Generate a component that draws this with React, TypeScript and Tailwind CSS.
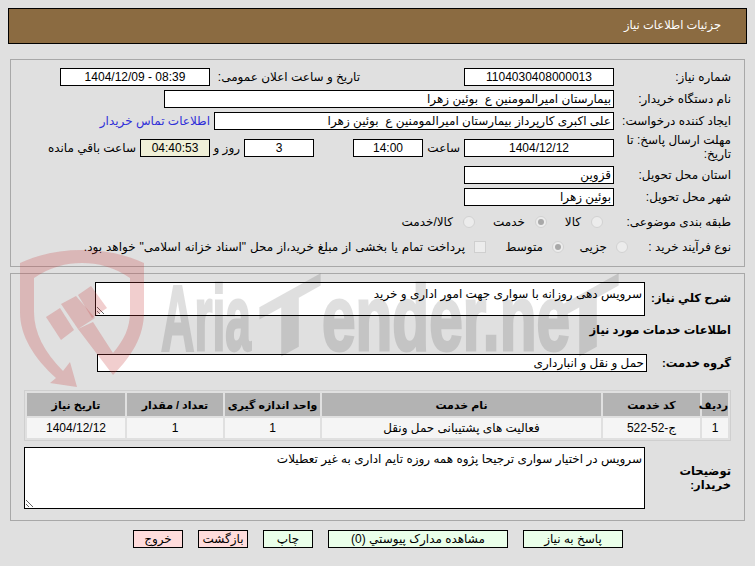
import React from 'react';

const Field = ({ value, width, center, ltr }: { value: string; width: string; center?: boolean; ltr?: boolean }) => (
  <input
    readOnly
    value={value}
    dir={ltr ? 'ltr' : 'rtl'}
    className={`${width} ${center ? 'text-center' : 'text-right'} h-[18px] shrink-0 border border-black bg-white px-[2px] text-[12px] text-black outline-none`}
  />
);

const Radio = ({ checked }: { checked?: boolean }) => (
  <span className="flex h-[12px] w-[12px] shrink-0 items-center justify-center rounded-full border border-[#d2d2d2] bg-[#ececec]">
    {checked && <span className="h-[6px] w-[6px] rounded-full bg-[#a8a8a8]" />}
  </span>
);

const Btn = ({ label, width, pink }: { label: string; width: string; pink?: boolean }) => (
  <button className={`${width} ${pink ? 'bg-[#ffdcdc]' : 'bg-[#eaffea]'} h-[18px] border border-black text-[12px] leading-none text-black`}>
    {label}
  </button>
);

const columns = [
  { title: 'ردیف', value: '1', width: 'w-[26px]' },
  { title: 'کد خدمت', value: 'ج-52-522', width: 'w-[97px]' },
  { title: 'نام خدمت', value: 'فعالیت های پشتیبانی حمل ونقل', width: 'w-[279px]' },
  { title: 'واحد اندازه گیری', value: '1', width: 'w-[95px]' },
  { title: 'تعداد / مقدار', value: '1', width: 'w-[96px]' },
  { title: 'تاریخ نیاز', value: '1404/12/12', width: 'w-[98px]' },
];

export default function App() {
  return (
    <div dir="rtl" className="relative h-[566px] w-[755px] overflow-hidden bg-[#e0e0e0] pt-2 font-['Liberation_Sans','DejaVu_Sans',sans-serif] text-[12px] text-black">
      <div className="mx-2 flex h-[36px] items-center border border-black bg-[#8b6b41] pr-[25px] text-[11.5px] text-white">
        جزئیات اطلاعات نیاز
      </div>

      <div className="mx-[10px] mt-[15px] border border-[#a8a8a8] pb-[12px] pr-[13px] pt-2">
        <div className="flex h-[18px] items-center">
          <div className="w-[117px] shrink-0">شماره نیاز:</div>
          <Field value="1104030408000013" width="w-[150px]" center />
          <div className="w-[254px] shrink-0 whitespace-nowrap pr-[104px]">تاریخ و ساعت اعلان عمومی:</div>
          <Field value="1404/12/09 - 08:39" width="w-[150px]" center ltr />
        </div>
        <div className="mt-1 flex h-[18px] items-center">
          <div className="w-[117px] shrink-0">نام دستگاه خریدار:</div>
          <Field value="بیمارستان امیرالمومنین ع  بوئین زهرا" width="w-[450px]" />
        </div>
        <div className="mt-1 flex h-[18px] items-center">
          <div className="w-[117px] shrink-0">ایجاد کننده درخواست:</div>
          <Field value="علی اکبری کارپرداز بیمارستان امیرالمومنین ع  بوئین زهرا" width="w-[400px]" />
          <div className="mr-1 whitespace-nowrap text-[#2f2fd8]">اطلاعات تماس خریدار</div>
        </div>
        <div className="mt-[9px] flex h-[18px] items-center">
          <div className="-mt-[3px] w-[117px] shrink-0 leading-[14px]">مهلت ارسال پاسخ: تا تاریخ:</div>
          <Field value="1404/12/12" width="w-[150px]" center />
          <div className="w-[41px] shrink-0 pr-[4px]">ساعت</div>
          <Field value="14:00" width="w-[70px]" center />
          <div className="w-[39px] shrink-0" />
          <Field value="3" width="w-[70px]" center />
          <div className="w-[34px] shrink-0 whitespace-nowrap pr-[4px]">روز و</div>
          <input readOnly value="04:40:53" dir="ltr" className="h-[18px] w-[70px] shrink-0 border border-black bg-[#f0f0d8] text-center text-[12px] outline-none" />
          <div className="mr-1 whitespace-nowrap">ساعت باقي مانده</div>
        </div>
        <div className="mt-[9px] flex h-[18px] items-center">
          <div className="w-[117px] shrink-0">استان محل تحویل:</div>
          <Field value="قزوین" width="w-[150px]" />
        </div>
        <div className="mt-1 flex h-[18px] items-center">
          <div className="w-[117px] shrink-0">شهر محل تحویل:</div>
          <Field value="بوئین زهرا" width="w-[150px]" />
        </div>
        <div className="mt-[9px] flex h-[14px] items-center">
          <div className="w-[128px] shrink-0">طبقه بندی موضوعی:</div>
          <div className="flex w-[56px] shrink-0 items-center gap-[10px]"><Radio />کالا</div>
          <div className="flex w-[72px] shrink-0 items-center gap-[10px]"><Radio checked />خدمت</div>
          <div className="flex items-center gap-[10px]"><Radio />کالا/خدمت</div>
        </div>
        <div className="mt-[11px] flex h-[14px] items-center">
          <div className="w-[103px] shrink-0">نوع فرآیند خرید :</div>
          <div className="flex w-[64px] shrink-0 items-center gap-[9px]"><Radio />جزیی</div>
          <div className="flex w-[78px] shrink-0 items-center gap-[9px]"><Radio checked />متوسط</div>
          <div className="flex items-center gap-[9px] whitespace-nowrap [word-spacing:0.6px]">
            <span className="h-[12px] w-[12px] shrink-0 border border-[#cfcfcf] bg-[#ececec]" />
            پرداخت تمام یا بخشی از مبلغ خرید،از محل "اسناد خزانه اسلامی" خواهد بود.
          </div>
        </div>
      </div>

      <div className="mx-[10px] mt-[6px] h-[248px] border border-[#a8a8a8] pr-[13px] pt-2">
        <div className="flex">
          <div className="flex h-[34px] w-[86px] shrink-0 items-center text-[11.5px] font-bold">شرح کلي نیاز:</div>
          <textarea readOnly defaultValue="سرویس دهی روزانه با سواری جهت امور اداری و خرید" className="h-[34px] w-[550px] border border-black bg-white p-[2px] text-[12px] outline-none" />
        </div>
        <div className="mt-[6px] text-[11.5px] font-bold">اطلاعات خدمات مورد نیاز</div>
        <div className="mt-[15px] flex h-[18px] items-center">
          <div className="w-[84px] shrink-0 text-[11.5px] font-bold">گروه خدمت:</div>
          <Field value="حمل و نقل و انبارداری" width="w-[550px]" />
        </div>
        <table className="mt-[18px] w-[707px] table-fixed border-separate border-spacing-[2px] border border-[#cfcfcf] text-center">
          <thead>
            <tr>
              {columns.map((c) => (
                <th key={c.title} className={`${c.width} h-[23px] whitespace-nowrap bg-[#b3b3b3] p-0 text-[11px] font-bold`}>{c.title}</th>
              ))}
            </tr>
          </thead>
          <tbody>
            <tr>
              {columns.map((c) => (
                <td key={c.title} className="h-[20px] bg-[#f5f5f5] p-0 text-[12px]">{c.value}</td>
              ))}
            </tr>
          </tbody>
        </table>
        <div className="mt-[6px] flex">
          <div className="flex h-[62px] w-[86px] shrink-0 items-center text-[11.5px] font-bold leading-[14px]">توضیحات خریدار:</div>
          <textarea readOnly defaultValue="سرویس در اختیار سواری ترجیحا پژوه همه روزه تایم اداری به غیر تعطیلات" className="h-[62px] w-[621px] border border-black bg-white p-[2px] text-[12px] outline-none" />
        </div>
      </div>

      <div className="mt-[9px] flex gap-[15px] pr-[132px]">
        <Btn label="پاسخ به نیاز" width="w-[100px]" />
        <Btn label="مشاهده مدارک پیوستي (0)" width="w-[180px]" />
        <Btn label="چاپ" width="w-[50px]" />
        <Btn label="بازگشت" width="w-[50px]" pink />
        <Btn label="خروج" width="w-[50px]" pink />
      </div>

      {/* watermark lies over the whole page */}
      <svg dir="ltr" className="pointer-events-none absolute left-0 top-0" width="755" height="566" viewBox="0 0 755 566">
        <g fill="rgba(200,60,60,0.25)">
          <path d="M20 263C40 254 60 250 82 250C104 250 124 254 144 263V312C144 336 132 356 113 375L78 329L93 322L113 353C124 340 130 328 130 312V278C114 267 98 263 82 263C66 263 50 267 34 278V312C34 332 44 352 63 371L70 362L77 387L50 383L56 378C34 358 20 336 20 312Z" />
          <path d="M46 317L60 308L74 330L61 340Z" />
          <path d="M61 304L76 296L95 318L78 329Z" />
          <path d="M78 295L91 286L107 308L92 318Z" />
        </g>
        <g opacity="0.12" fontFamily="Liberation Sans" fontWeight="700" direction="ltr" fill="#000" stroke="#000" strokeWidth="3">
          <text x="161" y="350" fontSize="93" textLength="90" lengthAdjust="spacingAndGlyphs">Aria</text>
          <text x="-30" y="0" fontSize="85" textLength="60" lengthAdjust="spacingAndGlyphs" transform="translate(290 350) skewY(-29)">T</text>
          <text x="322" y="350" fontSize="93" textLength="248" lengthAdjust="spacingAndGlyphs">ender.ne</text>
          <text x="-30" y="0" fontSize="85" textLength="60" lengthAdjust="spacingAndGlyphs" transform="translate(588 350) skewY(-29)">T</text>
        </g>
      </svg>
    </div>
  );
}
